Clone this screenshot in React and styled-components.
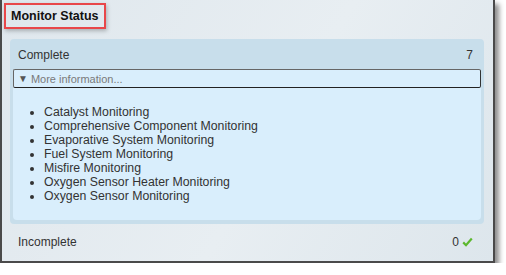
import React from "react";
import styled, { createGlobalStyle } from "styled-components";

const monitors = [
  "Catalyst Monitoring",
  "Comprehensive Component Monitoring",
  "Evaporative System Monitoring",
  "Fuel System Monitoring",
  "Misfire Monitoring",
  "Oxygen Sensor Heater Monitoring",
  "Oxygen Sensor Monitoring"
];

const App = () => {
  return (
    <>
      <GlobalStyle />
      <Frame>
        <TitleBox>
          <Title>Monitor Status</Title>
        </TitleBox>
        <Panel>
          <PanelHeader>
            <span>Complete</span>
            <span>7</span>
          </PanelHeader>
          <Body>
            <MoreInfo>
              <span className='arrow'>▼</span> More information...
            </MoreInfo>
            <List>
              {monitors.map(m => (
                <li key={m}>{m}</li>
              ))}
            </List>
          </Body>
        </Panel>
        <Row>
          <span>Incomplete</span>
          <span className='count'>
            0
            <svg width='11' height='10' viewBox='0 0 11 10'>
              <path
                d='M1.2 5.4 L4 8.2 L9.8 1.6'
                fill='none'
                stroke='#5cb82e'
                strokeWidth='2.2'
              />
            </svg>
          </span>
        </Row>
      </Frame>
    </>
  );
};

const GlobalStyle = createGlobalStyle`
  body {
    margin: 0;
    background: #fff;
    font-family: "Liberation Sans", Arial, sans-serif;
  }
`;

const Frame = styled.div`
  width: 491px;
  height: 258px;
  border: 2px solid #4a4a4a;
  border-top: none;
  background: linear-gradient(120deg, #dfe7ed 0%, #e8eef2 55%, #dde6ec 100%);
  box-shadow: 4px 4px 5px rgba(0, 0, 0, 0.45);
  display: flex;
  flex-direction: column;
  padding-top: 3px;
`;

const TitleBox = styled.div`
  align-self: flex-start;
  margin-left: 2px;
  width: 98px;
  height: 22px;
  border: 2px solid #e8474a;
  box-shadow: 1px 2px 4px rgba(0, 0, 0, 0.25);
  display: flex;
  align-items: center;
`;

const Title = styled.h1`
  margin: 0 0 0 5px;
  font-size: 12.5px;
  font-weight: bold;
  color: #111;
`;

const Panel = styled.div`
  margin: 10px 9px 0 8px;
  background: #c8deeb;
  border-radius: 4px;
  padding: 0 3px 4px 3px;
`;

const PanelHeader = styled.div`
  display: flex;
  justify-content: space-between;
  align-items: center;
  height: 29px;
  padding: 1px 8px 0 5px;
  font-size: 12px;
  color: #333;
`;

const Body = styled.div`
  background: #d9eefc;
  border-radius: 0 0 4px 4px;
  height: 151px;
`;

const MoreInfo = styled.div`
  height: 17px;
  border: 1px solid #666;
  border-bottom-color: #222;
  border-right-color: #333;
  border-radius: 2px;
  padding-left: 4px;
  display: flex;
  align-items: center;
  font-size: 11px;
  color: #7a7a7a;
  .arrow {
    font-size: 10px;
    color: #555;
    margin-right: 3px;
  }
`;

const List = styled.ul`
  margin: 17px 0 0 0;
  padding-left: 31px;
  font-size: 12.3px;
  line-height: 14px;
  color: #333;
`;

const Row = styled.div`
  display: flex;
  justify-content: space-between;
  align-items: center;
  flex: 1;
  padding: 0 20px 2px 16px;
  font-size: 12px;
  color: #333;
  .count {
    display: flex;
    align-items: center;
    gap: 3px;
  }
`;

export default App;
